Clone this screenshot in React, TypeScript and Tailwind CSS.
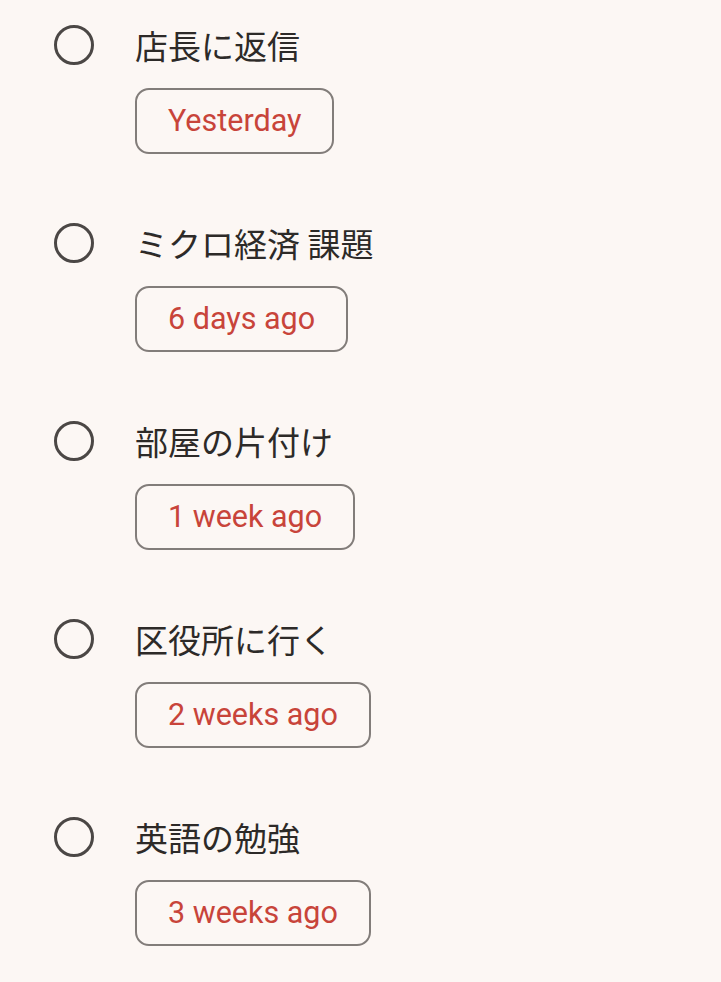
const tasks = [
  { title: '店長に返信', due: 'Yesterday' },
  { title: 'ミクロ経済 課題', due: '6 days ago' },
  { title: '部屋の片付け', due: '1 week ago' },
  { title: '区役所に行く', due: '2 weeks ago' },
  { title: '英語の勉強', due: '3 weeks ago' },
]

const App = () => {
  return (
    <div className="min-h-[982px] w-full bg-[#fcf7f4] pt-[25px]">
      <ul className="flex flex-col gap-[69px]">
        {tasks.map((task) => (
          <li key={task.title} className="flex pl-[54px]">
            <div className="box-border h-10 w-10 shrink-0 rounded-full border-[3px] border-[#4b4745]"></div>
            <div className="ml-[41px] flex flex-col items-start">
              <span className="text-[33px] leading-10 text-[#2d2a28] [font-family:'Noto_Sans_CJK_JP',sans-serif]">
                {task.title}
              </span>
              <span className="mt-[23px] flex h-[66px] items-center rounded-[14px] border-2 border-[#827d7a] px-[31px] text-[30.5px] text-[#c8443a] [font-family:Roboto,sans-serif]">
                {task.due}
              </span>
            </div>
          </li>
        ))}
      </ul>
    </div>
  )
}

export default App
